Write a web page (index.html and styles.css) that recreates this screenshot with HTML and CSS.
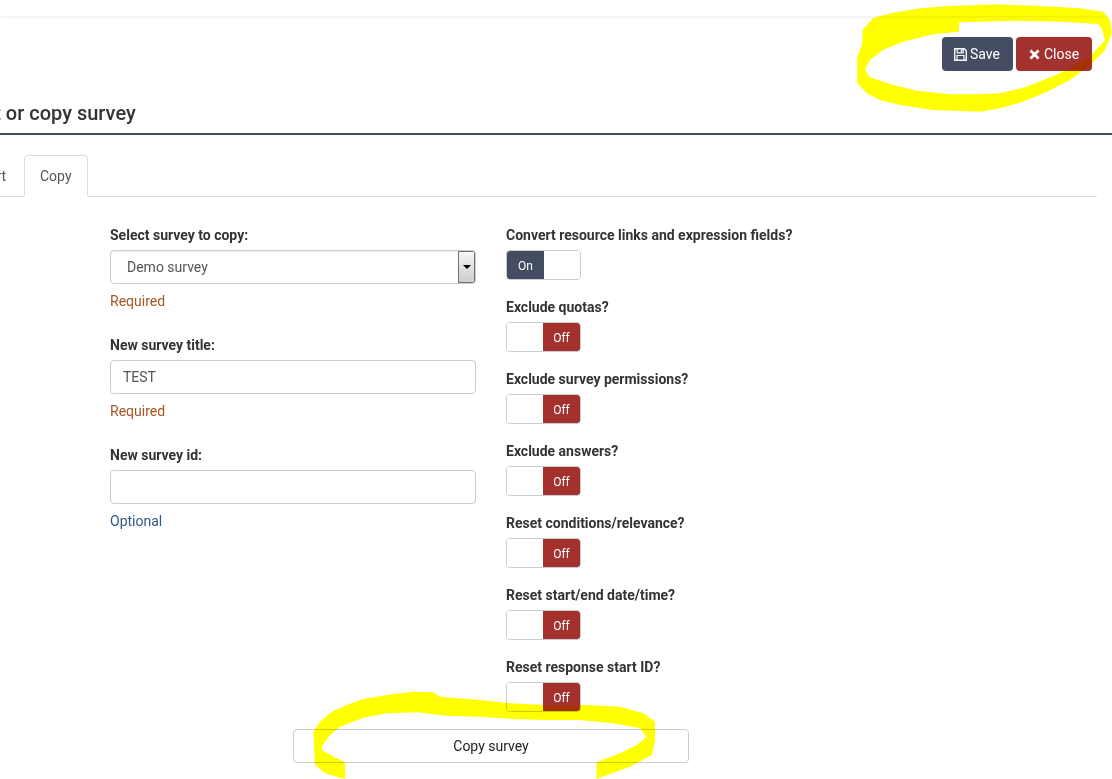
FILE: index.html
```html
<!DOCTYPE html>
<html lang="en">
<head>
<meta charset="utf-8">
<title>Import or copy survey</title>
<link rel="stylesheet" href="styles.css">
</head>
<body>
<div class="page">
  <div class="topbar"></div>
  <div class="actions">
    <button class="btn btn-save"><svg class="ico" viewBox="0 0 13 13"><path fill="none" stroke="#f7fafd" stroke-width="1.400" d="M.7.700h9.500l2.100 2.100v9.500H.7z"/><path fill="none" stroke="#f7fafd" stroke-width="1.200" d="M3.200 1v3.800h6V1M3 12V7.500h7V12"/><path fill="#f7fafd" d="M6.800 1.300h1.400v2.700H6.800z"/></svg>Save</button>
    <button class="btn btn-close"><svg class="ico ico-x" viewBox="0 0 11 11"><path fill="#fff" d="M2.400.5l3.100 3.100L8.600.5l1.900 1.900-3.100 3.100 3.100 3.100-1.900 1.900-3.100-3.100-3.100 3.100L.5 8.600l3.100-3.100L.5 2.400z"/></svg>Close</button>
  </div>
  <h1 class="title">Import or copy survey</h1>
  <div class="tabs">
    <a class="tab">Import</a>
    <a class="tab active">Copy</a>
  </div>
  <div class="form">
    <div class="col-left">
      <div class="field">
        <label>Select survey to copy:</label>
        <div class="control select"><span class="select-text">Demo survey</span><span class="select-arrow"></span></div>
        <p class="hint req">Required</p>
      </div>
      <div class="field">
        <label>New survey title:</label>
        <div class="control">TEST</div>
        <p class="hint req">Required</p>
      </div>
      <div class="field">
        <label>New survey id:</label>
        <div class="control"></div>
        <p class="hint opt">Optional</p>
      </div>
    </div>
    <div class="col-right">
      <div class="sw-field"><label>Convert resource links and expression fields?</label><div class="switch"><span class="on">On</span><span class="blank"></span></div></div>
      <div class="sw-field"><label>Exclude quotas?</label><div class="switch"><span class="blank"></span><span class="off">Off</span></div></div>
      <div class="sw-field"><label>Exclude survey permissions?</label><div class="switch"><span class="blank"></span><span class="off">Off</span></div></div>
      <div class="sw-field"><label>Exclude answers?</label><div class="switch"><span class="blank"></span><span class="off">Off</span></div></div>
      <div class="sw-field"><label>Reset conditions/relevance?</label><div class="switch"><span class="blank"></span><span class="off">Off</span></div></div>
      <div class="sw-field"><label>Reset start/end date/time?</label><div class="switch"><span class="blank"></span><span class="off">Off</span></div></div>
      <div class="sw-field"><label>Reset response start ID?</label><div class="switch"><span class="blank"></span><span class="off">Off</span></div></div>
    </div>
  </div>
  <div class="submit-row"><button class="btn-copy">Copy survey</button></div>
</div>
<svg class="marker" viewBox="0 0 1112 779">
  <path fill="#ffff00" fill-rule="evenodd" d="M980 5L950 6L920 8.300L893 12.700L873 18L862.700 30L862 44.300L857.300 56.700L857.300 83.300L866.700 93.300L880 100L900 105L933 110L980 111.700L1000 108.300L1023 101.700L1047 91.700L1070 80L1090 65L1105 50L1111.700 33L1110 20L1103 11.700L1080 8.300L1040 6L997 4.300ZM959 22.300V31.700L933 34.300L903 41.700L883 50L870 60L865 70L870 77.300L890 84L917 90.700L950 94.300L980 94.300L1000 93.300L1027 86.700L1060 73.300L1090 56.700L1105 40L1101.700 28.300L1097.700 24L1063 21.700L1013 20.700L980 21.700Z"/>
  <path fill="#ffff00" d="M345 779L325 773.300L315 765L313.300 731.700L320 721.700L331.700 711.700L346.700 705L363.300 699L386.700 695L413.300 691.700L433.300 692.300L440 696.700L480 700L510 703.300L546.700 705L586.700 705L620 706.700L643.300 713.300L655 721.700L655 741.700L651.700 755L630 766.700L611.700 773.300L596.700 779V762.300L620 753.300L636.700 745L646.700 736.700L640 728.300L613.300 723.300L580 720L546.700 720L513.300 719L480 716.700L446.700 715.700L416.700 712.300L386.700 713.300L363.300 717.700L340 726.700L330 735L321.700 746.700L323.300 751L336.700 758.300L345 762.300Z"/>
</svg>
</body>
</html>
```
FILE: styles.css
```css
* { box-sizing: border-box; }
html, body { margin: 0; padding: 0; height: 100%; overflow: hidden; background: #fff; }
body { font-family: Roboto, "Liberation Sans", sans-serif; font-size: 14px; color: #333; }
.page { width: 1112px; height: 779px; overflow: hidden; }
.topbar { height: 16px; background: #fff; box-shadow: 0 1px 3px rgba(0,0,0,.08); }
.actions { display: flex; justify-content: flex-end; gap: 3px; padding: 21px 20px 0 0; }
.btn { height: 34px; border: 1px solid transparent; border-radius: 4px; color: #fff; font: 14px Roboto, sans-serif; padding: 0 11px; display: flex; align-items: center; gap: 3px; }
.btn-save { width: 71px; background: #444d62; }
.btn-close { width: 76px; padding-left: 12px; gap: 4px; background: #a3322e; }
.ico { width: 13px; height: 13px; flex: none; }
.ico-x { width: 11px; height: 11px; }
.title { margin: 30px 0 0 -59px; width: 1171px; height: 34px; font-size: 20px; font-weight: 500; line-height: 24px; color: #333; white-space: nowrap; border-bottom: 2px solid #444d5f; }
.tabs { display: flex; margin-top: 20px; margin-left: -40px; width: 1137px; height: 42px; border-bottom: 1px solid #ddd; }
.tab { display: block; height: 42px; padding: 10px 15px 0; line-height: 20px; color: #555; border: 1px solid transparent; border-radius: 4px 4px 0 0; }
.tab:first-child { width: 63px; margin-right: 1px; padding-left: 0; padding-right: 16px; text-align: right; }
.tab.active { width: 64px; border-color: #ddd #ddd #fff; background: #fff; }
.form { display: flex; padding: 0 0 0 110px; margin-top: 28px; }
.col-left { width: 366px; margin-right: 30px; }
.col-right { width: 400px; }
label { display: block; font-weight: 700; font-size: 14px; line-height: 20px; color: #333; }
.field { height: 110px; }
.control { margin-top: 5px; height: 34px; border: 1px solid #ccc; border-radius: 4px; padding: 0 12px; line-height: 32px; color: #555; }
.select { display: flex; justify-content: space-between; padding: 0 0 0 16px; overflow: hidden; box-shadow: inset 0 1px 1px rgba(0,0,0,.075); }
.select-arrow { width: 17px; height: 32px; border: 1px solid #707070; background: linear-gradient(#f6f6f6, #cdcdcd); display: flex; align-items: center; justify-content: center; }
.select-arrow::after { content: ""; border: 4px solid transparent; border-top: 4px solid #000; border-bottom: 0; }
.hint { margin: 7px 0 0; line-height: 20px; }
.req { color: #a5561f; }
.opt { color: #2d5a87; }
.sw-field { height: 72px; }
.switch { margin-top: 5px; width: 75px; height: 30px; border: 1px solid #ccc; border-radius: 4px; overflow: hidden; display: flex; font-size: 12px; line-height: 30px; text-align: center; color: #fff; }
.switch span { display: block; height: 28px; }
.switch .on, .switch .off { width: 37px; flex: none; }
.switch .on { background: #444d62; }
.switch .off { background: #a3322e; }
.switch .blank { flex: 1; background: #fff; }
.submit-row { margin-top: 0; padding-left: 293px; }
.btn-copy { display: block; width: 396px; height: 34px; background: #fff; border: 1px solid #ccc; border-radius: 4px; font: 14px Roboto, sans-serif; color: #222; padding: 0; }
.marker { position: absolute; left: 0; top: 0; width: 1112px; height: 779px; mix-blend-mode: multiply; pointer-events: none; }
```
